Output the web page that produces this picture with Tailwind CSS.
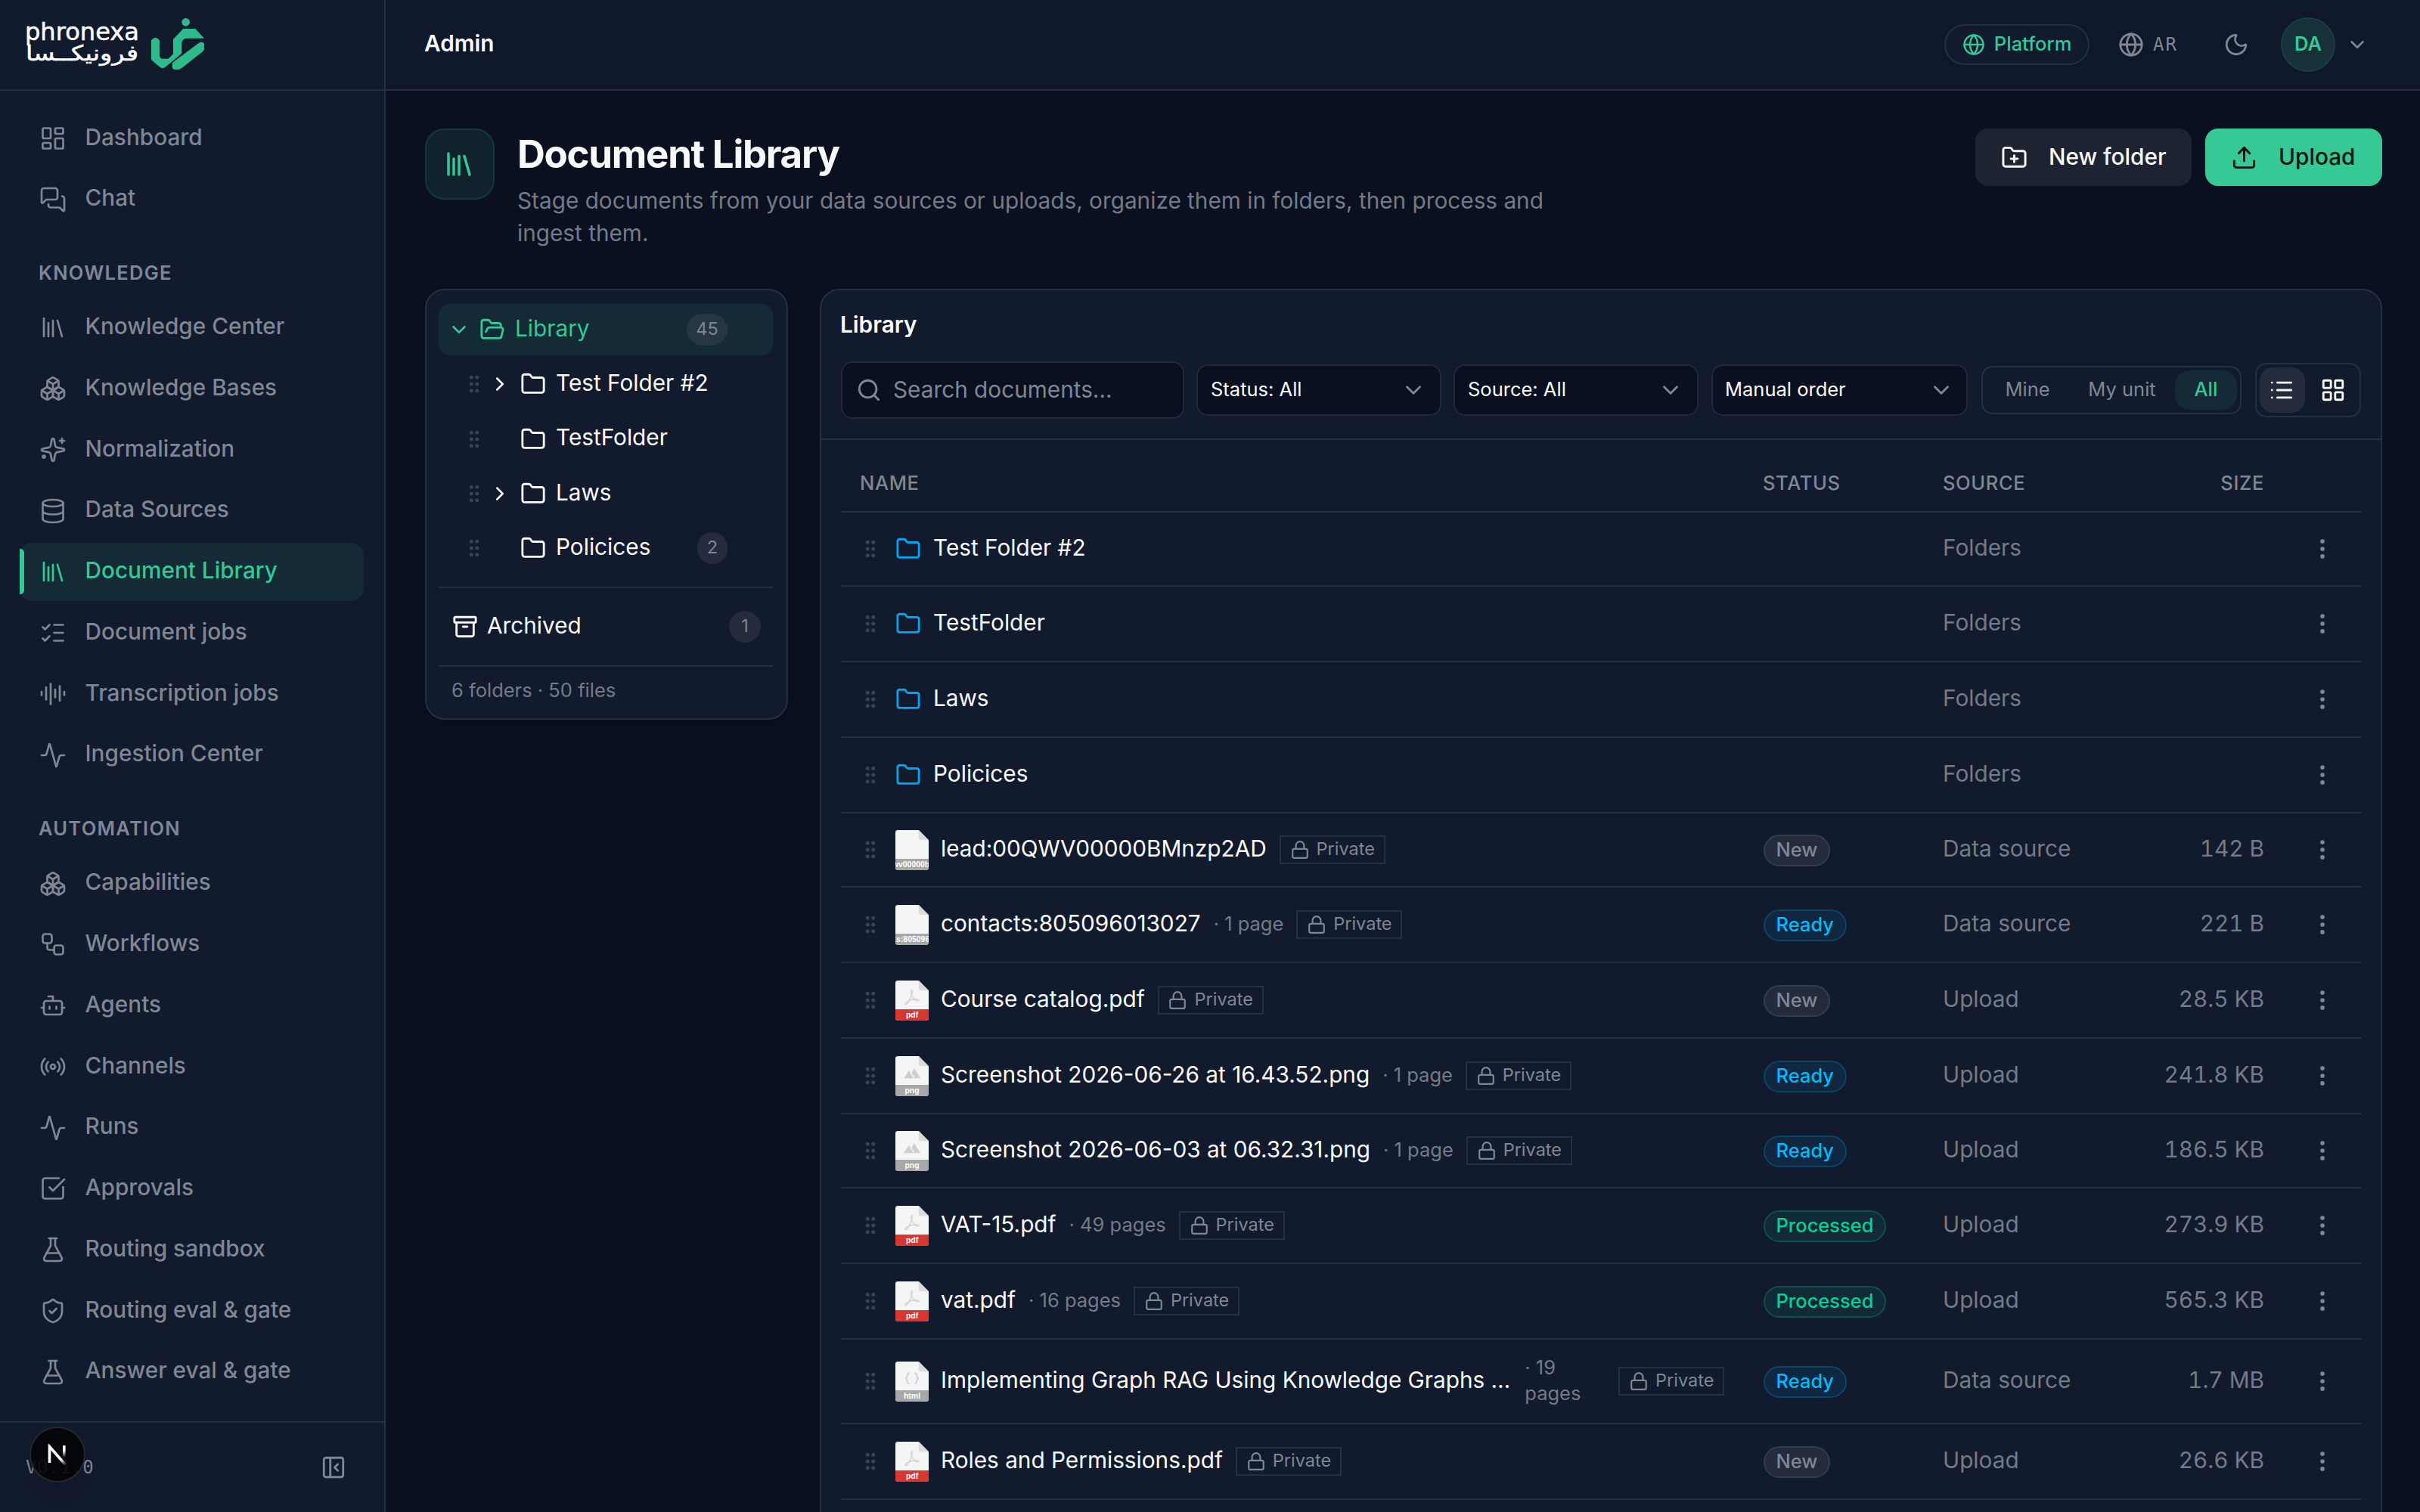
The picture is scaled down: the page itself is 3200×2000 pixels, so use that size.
<!DOCTYPE html>
<html lang="en" class="text-[34px]">
<head>
    <meta charset="UTF-8">
    <meta name="viewport" content="width=device-width, initial-scale=1.0">
    <title>Document Library - Phronexa</title>
    <script src="https://cdn.jsdelivr.net/npm/@tailwindcss/browser@4"></script>
    <style>
        body { font-family: 'Inter', sans-serif; }
        symbol { fill: none; stroke: currentColor; stroke-linecap: round; stroke-linejoin: round; }
    </style>
</head>
<body class="bg-[#0a1020] text-[#fafafa] text-sm h-[2000px] w-[3200px] overflow-hidden flex">

    <!-- Icon sprite -->
    <svg class="hidden">
        <symbol id="dashboard" viewBox="0 0 24 24"><rect width="7" height="9" x="3" y="3" rx="1"/><rect width="7" height="5" x="14" y="3" rx="1"/><rect width="7" height="9" x="14" y="12" rx="1"/><rect width="7" height="5" x="3" y="16" rx="1"/></symbol>
        <symbol id="chat" viewBox="0 0 24 24"><path d="M16 10a2 2 0 0 1-2 2H6.828a2 2 0 0 0-1.414.586l-2.202 2.202A.71.71 0 0 1 2 14.286V4a2 2 0 0 1 2-2h10a2 2 0 0 1 2 2z"/><path d="M20 9a2 2 0 0 1 2 2v10.286a.71.71 0 0 1-1.212.502l-2.202-2.202A2 2 0 0 0 17.172 19H10a2 2 0 0 1-2-2v-1"/></symbol>
        <symbol id="library" viewBox="0 0 24 24"><path d="m16 6 4 14"/><path d="M12 6v14"/><path d="M8 8v12"/><path d="M4 4v16"/></symbol>
        <symbol id="boxes" viewBox="0 0 24 24"><path d="M2.97 12.92A2 2 0 0 0 2 14.63v3.24a2 2 0 0 0 .97 1.71l3 1.8a2 2 0 0 0 2.06 0L12 19v-5.5l-5-3-4.03 2.42Z"/><path d="m7 16.5-4.74-2.85"/><path d="m7 16.5 5-3"/><path d="M7 16.5v5.17"/><path d="M12 13.5V19l3.97 2.38a2 2 0 0 0 2.06 0l3-1.8a2 2 0 0 0 .97-1.71v-3.24a2 2 0 0 0-.97-1.71L17 10.5l-5 3Z"/><path d="m17 16.5-5-3"/><path d="m17 16.5 4.74-2.85"/><path d="M17 16.5v5.17"/><path d="M7.97 4.42A2 2 0 0 0 7 6.13v4.37l5 3 5-3V6.13a2 2 0 0 0-.97-1.71l-3-1.8a2 2 0 0 0-2.06 0l-3 1.8Z"/><path d="M12 8 7.26 5.15"/><path d="m12 8 4.74-2.85"/><path d="M12 13.5V8"/></symbol>
        <symbol id="sparkles" viewBox="0 0 24 24"><path d="M11.017 2.814a1 1 0 0 1 1.966 0l1.051 5.558a2 2 0 0 0 1.594 1.594l5.558 1.051a1 1 0 0 1 0 1.966l-5.558 1.051a2 2 0 0 0-1.594 1.594l-1.051 5.558a1 1 0 0 1-1.966 0l-1.051-5.558a2 2 0 0 0-1.594-1.594l-5.558-1.051a1 1 0 0 1 0-1.966l5.558-1.051a2 2 0 0 0 1.594-1.594z"/><path d="M20 2v4"/><path d="M22 4h-4"/><circle cx="4" cy="18" r="1"/></symbol>
        <symbol id="database" viewBox="0 0 24 24"><ellipse cx="12" cy="5" rx="9" ry="3"/><path d="M3 5v14a9 3 0 0 0 18 0V5"/><path d="M3 12a9 3 0 0 0 18 0"/></symbol>
        <symbol id="checks" viewBox="0 0 24 24"><path d="M13 5h8"/><path d="M13 12h8"/><path d="M13 19h8"/><path d="m3 17 2 2 4-4"/><path d="m3 7 2 2 4-4"/></symbol>
        <symbol id="audio" viewBox="0 0 24 24"><path d="M2 10v3"/><path d="M6 6v11"/><path d="M10 3v18"/><path d="M14 8v7"/><path d="M18 5v13"/><path d="M22 10v3"/></symbol>
        <symbol id="activity" viewBox="0 0 24 24"><path d="M22 12h-2.48a2 2 0 0 0-1.93 1.46l-2.35 8.36a.25.25 0 0 1-.48 0L9.24 2.18a.25.25 0 0 0-.48 0l-2.35 8.36A2 2 0 0 1 4.49 12H2"/></symbol>
        <symbol id="workflow" viewBox="0 0 24 24"><rect width="8" height="8" x="3" y="3" rx="2"/><path d="M7 11v4a2 2 0 0 0 2 2h4"/><rect width="8" height="8" x="13" y="13" rx="2"/></symbol>
        <symbol id="bot" viewBox="0 0 24 24"><path d="M12 8V4H8"/><rect width="16" height="12" x="4" y="8" rx="2"/><path d="M2 14h2"/><path d="M20 14h2"/><path d="M15 13v2"/><path d="M9 13v2"/></symbol>
        <symbol id="radio" viewBox="0 0 24 24"><path d="M16.247 7.761a6 6 0 0 1 0 8.478"/><path d="M19.075 4.933a10 10 0 0 1 0 14.134"/><path d="M4.925 19.067a10 10 0 0 1 0-14.134"/><path d="M7.753 16.239a6 6 0 0 1 0-8.478"/><circle cx="12" cy="12" r="2"/></symbol>
        <symbol id="approve" viewBox="0 0 24 24"><path d="M21 10.656V19a2 2 0 0 1-2 2H5a2 2 0 0 1-2-2V5a2 2 0 0 1 2-2h12.344"/><path d="m9 11 3 3L22 4"/></symbol>
        <symbol id="flask" viewBox="0 0 24 24"><path d="M14 2v6a2 2 0 0 0 .245.96l5.51 10.08A2 2 0 0 1 18 22H6a2 2 0 0 1-1.755-2.96l5.51-10.08A2 2 0 0 0 10 8V2"/><path d="M6.453 15h11.094"/><path d="M8.5 2h7"/></symbol>
        <symbol id="shield" viewBox="0 0 24 24"><path d="M20 13c0 5-3.5 7.5-7.66 8.95a1 1 0 0 1-.67-.01C7.5 20.5 4 18 4 13V6a1 1 0 0 1 1-1c2 0 4.5-1.2 6.24-2.72a1.17 1.17 0 0 1 1.52 0C14.51 3.81 17 5 19 5a1 1 0 0 1 1 1z"/><path d="m9 12 2 2 4-4"/></symbol>
        <symbol id="panel-close" viewBox="0 0 24 24"><rect width="18" height="18" x="3" y="3" rx="2"/><path d="M9 3v18"/><path d="m16 15-3-3 3-3"/></symbol>
        <symbol id="globe" viewBox="0 0 24 24"><circle cx="12" cy="12" r="10"/><path d="M12 2a14.5 14.5 0 0 0 0 20 14.5 14.5 0 0 0 0-20"/><path d="M2 12h20"/></symbol>
        <symbol id="moon" viewBox="0 0 24 24"><path d="M20.985 12.486a9 9 0 1 1-9.473-9.472c.405-.022.617.46.402.803a6 6 0 0 0 8.268 8.268c.344-.215.825-.004.803.401"/></symbol>
        <symbol id="down" viewBox="0 0 24 24"><path d="m6 9 6 6 6-6"/></symbol>
        <symbol id="right" viewBox="0 0 24 24"><path d="m9 18 6-6-6-6"/></symbol>
        <symbol id="folder" viewBox="0 0 24 24"><path d="M20 20a2 2 0 0 0 2-2V8a2 2 0 0 0-2-2h-7.9a2 2 0 0 1-1.69-.9L9.6 3.9A2 2 0 0 0 7.93 3H4a2 2 0 0 0-2 2v13a2 2 0 0 0 2 2Z"/></symbol>
        <symbol id="folder-plus" viewBox="0 0 24 24"><path d="M12 10v6"/><path d="M9 13h6"/><path d="M20 20a2 2 0 0 0 2-2V8a2 2 0 0 0-2-2h-7.9a2 2 0 0 1-1.69-.9L9.6 3.9A2 2 0 0 0 7.93 3H4a2 2 0 0 0-2 2v13a2 2 0 0 0 2 2Z"/></symbol>
        <symbol id="folder-open" viewBox="0 0 24 24"><path d="m6 14 1.5-2.9A2 2 0 0 1 9.24 10H20a2 2 0 0 1 1.94 2.5l-1.54 6a2 2 0 0 1-1.95 1.5H4a2 2 0 0 1-2-2V5a2 2 0 0 1 2-2h3.9a2 2 0 0 1 1.69.9l.81 1.2a2 2 0 0 0 1.67.9H18a2 2 0 0 1 2 2v2"/></symbol>
        <symbol id="upload" viewBox="0 0 24 24"><path d="M12 3v12"/><path d="m17 8-5-5-5 5"/><path d="M21 15v4a2 2 0 0 1-2 2H5a2 2 0 0 1-2-2v-4"/></symbol>
        <symbol id="archive" viewBox="0 0 24 24"><rect width="20" height="5" x="2" y="3" rx="1"/><path d="M4 8v11a2 2 0 0 0 2 2h12a2 2 0 0 0 2-2V8"/><path d="M10 12h4"/></symbol>
        <symbol id="grip" viewBox="0 0 24 24"><circle cx="9" cy="12" r="1"/><circle cx="9" cy="5" r="1"/><circle cx="9" cy="19" r="1"/><circle cx="15" cy="12" r="1"/><circle cx="15" cy="5" r="1"/><circle cx="15" cy="19" r="1"/></symbol>
        <symbol id="more" viewBox="0 0 24 24"><circle cx="12" cy="12" r="1"/><circle cx="12" cy="5" r="1"/><circle cx="12" cy="19" r="1"/></symbol>
        <symbol id="search" viewBox="0 0 24 24"><path d="m21 21-4.34-4.34"/><circle cx="11" cy="11" r="8"/></symbol>
        <symbol id="list" viewBox="0 0 24 24"><path d="M3 5h.01"/><path d="M3 12h.01"/><path d="M3 19h.01"/><path d="M8 5h13"/><path d="M8 12h13"/><path d="M8 19h13"/></symbol>
        <symbol id="grid" viewBox="0 0 24 24"><rect width="7" height="7" x="3" y="3" rx="1"/><rect width="7" height="7" x="14" y="3" rx="1"/><rect width="7" height="7" x="14" y="14" rx="1"/><rect width="7" height="7" x="3" y="14" rx="1"/></symbol>
        <symbol id="lock" viewBox="0 0 24 24"><rect width="18" height="11" x="3" y="11" rx="2"/><path d="M7 11V7a5 5 0 0 1 10 0v4"/></symbol>
        <!-- glyphs printed on the file thumbnails -->
        <symbol id="glyph-pdf" viewBox="0 0 24 24"><path stroke-width="1.1" d="M11.5 2.5c-1.6 0-.8 5 .6 8 1.8 4 4.5 6 7.4 6.2 2.3.1 2-1.6-.5-2-4-.6-9.5.9-13 2.8-3 1.7-3.5 3.8-2.5 3.9 2.2.2 5.7-6.6 7.7-12 1.3-3.7 1.7-6.9.3-6.9Z"/></symbol>
        <symbol id="glyph-image" viewBox="0 0 24 24"><path fill="currentColor" stroke="none" d="M1 19 8 9l3 4 4-7 8 13Z"/><path class="stroke-[#f5f5f5]" stroke-width="1.5" d="m10 12 4.5 6"/></symbol>
        <symbol id="glyph-code" viewBox="0 0 24 24"><path stroke-width="1.8" d="M8 5c-3 0-1.5 5.5-4 7 2.5 1.5 1 7 4 7M16 5c3 0 1.5 5.5 4 7-2.5 1.5-1 7-4 7"/></symbol>
    </svg>

    <!-- Sidebar -->
    <aside class="w-[510px] shrink-0 h-full bg-[#121a2e] border-r-2 border-[#243044] flex flex-col">
        <div class="h-[120px] shrink-0 border-b-2 border-[#243044] pl-[32px] flex items-center">
            <svg class="w-[240px] h-[80px] overflow-visible" viewBox="32 19 240 80">
                <g fill="#fff" stroke="#fff" stroke-width=".5" font-family="DejaVu Sans, sans-serif">
                    <text x="33" y="53" font-size="32" textLength="151" lengthAdjust="spacingAndGlyphs">phronexa</text>
                    <text x="183" y="80" font-size="28" textLength="149" lengthAdjust="spacingAndGlyphs" direction="rtl">فرونيكــسا</text>
                </g>
                <g fill="#2fba8b" transform="translate(20 10) scale(.3333)">
                    <circle cx="677" cy="58" r="16"/>
                    <path d="M540 130q16-22 33 0v58q0 15 15 15h20l19-19v-58l40-42h48l35 38h-66q-23 0-23 22v38l-66 55q-10 7-20 0l-35-30z"/>
                    <path d="M629 215 728 141q12-8 22 1v22q0 6-5 10l-85 67q-5 5-11 5h-17q-9-2-9-12v-8q0-7 6-11z"/>
                </g>
            </svg>
        </div>
        <nav id="nav" class="flex-1 overflow-hidden pl-3 pr-[27px] pt-[24.5px]"></nav>
        <div class="h-[120px] shrink-0 border-t-2 border-[#243044] pl-[34px] pr-[50px] flex items-center justify-between text-[#7f8794]">
            <span class="font-['DejaVu_Sans_Mono',monospace] text-[24px] tracking-[0.6px]">V0.1.0</span>
            <svg class="size-4 stroke-2"><use href="#panel-close"/></svg>
        </div>
    </aside>

    <!-- Dev tools badge floating over the sidebar footer -->
    <div class="absolute left-[39px] top-[1887px] size-[74px] rounded-full bg-[#030407]/90 border-2 border-[#26282c] shadow-2xl flex items-center justify-center">
        <svg class="size-[28px]" viewBox="0 0 28 28" fill="none" stroke-width="3.6">
            <defs>
                <linearGradient id="fade" x1="0" y1="0" x2="0" y2="1"><stop offset=".4" stop-color="#fff"/><stop offset="1" stop-color="#fff" stop-opacity="0"/></linearGradient>
                <linearGradient id="fade-diag" x1="0" y1="0" x2="1" y2="1"><stop offset=".7" stop-color="#fff"/><stop offset="1" stop-color="#fff" stop-opacity="0"/></linearGradient>
            </defs>
            <path stroke="url(#fade-diag)" d="M3.5 25V3.5L25 28"/>
            <rect x="21" y="2" width="3.6" height="16" fill="url(#fade)"/>
        </svg>
    </div>

    <div class="flex-1 min-w-0 flex flex-col">
        <!-- Top bar -->
        <header class="h-[120px] shrink-0 bg-[#0f172a] border-b-2 border-[#243044] pl-[51px] pr-[68px] flex items-center justify-between">
            <h2 class="font-semibold pb-[4px]">Admin</h2>
            <div class="flex items-center text-[#7f8794]">
                <div class="h-[54px] w-[192px] border-2 border-[#243044] bg-[#121a2e] rounded-full flex items-center justify-center gap-[12px] text-[#34c896] text-xs font-medium">
                    <svg class="size-[30px] stroke-2"><use href="#globe"/></svg><span class="pb-[3px]">Platform</span>
                </div>
                <svg class="size-4 stroke-2 ml-[38px]"><use href="#globe"/></svg>
                <span class="font-['DejaVu_Sans_Mono',monospace] text-[24px] tracking-[2px] ml-[12px]">AR</span>
                <svg class="size-4 stroke-2 ml-[60px]"><use href="#moon"/></svg>
                <div class="size-[72px] rounded-full bg-[#16313a] border-2 border-[#1a3d41] text-[#34c896] text-xs font-semibold flex items-center justify-center ml-[42px] pb-[3px]">DA</div>
                <svg class="size-[30px] stroke-2 ml-[14px]"><use href="#down"/></svg>
            </div>
        </header>

        <main class="flex-1 min-h-0 pl-[52px] pr-[50px] pt-[50px] flex flex-col">
            <!-- Page heading -->
            <div class="flex items-start h-[212px] shrink-0">
                <div class="w-[92px] h-[94px] rounded-xl bg-[#10232c] border-2 border-[#133a38] text-[#34c896] flex items-center justify-center pr-[2px]">
                    <svg class="size-[42px] stroke-2"><use href="#library"/></svg>
                </div>
                <div class="ml-[30px] w-[1440px]">
                    <h1 class="text-2xl leading-[68px] font-bold tracking-tight">Document Library</h1>
                    <p class="w-[1428px] mt-[6px] leading-[42.5px] text-[#747b88]">Stage documents from your data sources or uploads, organize them in folders, then process and ingest them.</p>
                </div>
                <div class="ml-auto flex gap-[18px] font-medium">
                    <button class="w-[286px] h-[76px] rounded-lg bg-[#1e2331] flex items-center pl-[34px] gap-[28px]">
                        <svg class="size-[35px] stroke-2"><use href="#folder-plus"/></svg><span class="pb-[2px]">New folder</span>
                    </button>
                    <button class="w-[234px] h-[76px] rounded-lg bg-[#36c996] text-[#07130f] flex items-center pl-[34px] gap-[28px]">
                        <svg class="size-[35px] stroke-2"><use href="#upload"/></svg><span class="pb-[2px]">Upload</span>
                    </button>
                </div>
            </div>

            <div class="flex-1 min-h-0 flex items-start gap-[42px]">
                <!-- Folder tree -->
                <section class="w-[480px] h-[570px] shrink-0 rounded-[26px] border-2 border-[#243044] bg-[#121a2e] pl-[16px] pr-[18px] pt-[18px] shadow-lg">
                    <div class="h-[68px] rounded-[15px] bg-[#152a37] text-[#34c896] flex items-center pl-[12px] pr-[60px]">
                        <svg class="size-[30px] stroke-2"><use href="#down"/></svg>
                        <svg class="size-4 stroke-2 ml-[12px] mr-[13px]"><use href="#folder-open"/></svg>
                        <span class="pb-[4px]">Library</span>
                        <span class="ml-auto h-[42px] w-[54px] rounded-full bg-[#273643] text-[#7f8794] text-[23.5px] flex items-center justify-center pb-[2px]">45</span>
                    </div>
                    <div id="tree"></div>
                    <div class="mt-[17px] py-[17px] border-y-2 border-[#243044]">
                        <div class="h-[68px] pl-[18px] pr-[16px] flex items-center">
                            <svg class="size-4 stroke-2 mr-[12px]"><use href="#archive"/></svg>
                            <span class="pb-[4px]">Archived</span>
                            <span class="ml-auto size-[42px] rounded-full bg-[#232b3c] text-[#7f8794] text-[23.5px] flex items-center justify-center pb-[2px]">1</span>
                        </div>
                    </div>
                    <p class="pt-[14px] pl-[17px] text-xs text-[#747b88]">6 folders · 50 files</p>
                </section>

                <!-- Documents -->
                <section class="flex-1 h-[1700px] rounded-t-[26px] border-2 border-[#243044] bg-[#121a2e]">
                    <div class="h-[198px] px-[26px] pt-[24px] border-b-2 border-[#243044]">
                        <h3 class="font-semibold leading-[42px] -ml-px">Library</h3>
                        <div class="flex items-center mt-[28px]">
                            <div class="w-[454px] h-[76px] rounded-[15px] border-2 border-[#1f293a] bg-[#0a101f] text-[#7f8794] flex items-center pl-[18px] gap-[15px]">
                                <svg class="size-[34px] stroke-2"><use href="#search"/></svg><span class="pb-[2px]">Search documents...</span>
                            </div>
                            <div class="w-[324px] h-[68px] ml-[16px] rounded-[15px] border-2 border-[#1f293a] bg-[#0a101f] text-xs flex items-center justify-between pl-[17px] pr-[18px]"><span class="pb-[2px]">Status: All</span><svg class="size-4 stroke-2 text-[#7f8794]"><use href="#down"/></svg></div>
                            <div class="w-[324px] h-[68px] ml-[16px] rounded-[15px] border-2 border-[#1f293a] bg-[#0a101f] text-xs flex items-center justify-between pl-[17px] pr-[18px]"><span class="pb-[2px]">Source: All</span><svg class="size-4 stroke-2 text-[#7f8794]"><use href="#down"/></svg></div>
                            <div class="w-[339px] h-[68px] ml-[17px] rounded-[15px] border-2 border-[#1f293a] bg-[#0a101f] text-xs flex items-center justify-between pl-[16px] pr-[16px]"><span class="pb-[2px]">Manual order</span><svg class="size-4 stroke-2 text-[#7f8794]"><use href="#down"/></svg></div>
                            <div class="w-[344px] h-[64px] ml-[18px] rounded-[15px] border-2 border-[#243044] text-xs text-[#7f8794] flex items-center p-[4px]">
                                <span class="w-[110px] text-center pb-[2px]">Mine</span>
                                <span class="w-[140px] text-center pb-[2px]">My unit</span>
                                <span class="w-[82px] h-[52px] rounded-[20px] bg-[#152a37] text-[#34c896] font-medium flex items-center justify-center pb-[2px]">All</span>
                            </div>
                            <div class="w-[140px] h-[72px] ml-[18px] rounded-[15px] border-2 border-[#243044] flex items-center justify-between p-[4px]">
                                <span class="size-[60px] rounded-[18px] bg-[#232b3c] flex items-center justify-center pr-[2px]"><svg class="size-[34px] stroke-2"><use href="#list"/></svg></span>
                                <span class="size-[60px] flex items-center justify-center pr-[2px]"><svg class="size-[34px] stroke-2"><use href="#grid"/></svg></span>
                            </div>
                        </div>
                    </div>
                    <div class="px-[26px]">
                        <div class="h-[96px] border-b-2 border-[#243044] grid grid-cols-[1219px_238px_425px_128px] items-center pt-[20px] text-xs font-medium tracking-wide text-[#7f8794]">
                            <span class="pl-[25px]">NAME</span><span>STATUS</span>
                            <div class="flex justify-between"><span>SOURCE</span><span>SIZE</span></div>
                        </div>
                        <div id="rows"></div>
                    </div>
                </section>
            </div>
        </main>
    </div>

    <script>
        const nav = [
            { items: [['dashboard', 'Dashboard'], ['chat', 'Chat']] },
            { title: 'KNOWLEDGE', items: [['library', 'Knowledge Center'], ['boxes', 'Knowledge Bases'], ['sparkles', 'Normalization'], ['database', 'Data Sources'], ['library', 'Document Library'], ['checks', 'Document jobs'], ['audio', 'Transcription jobs'], ['activity', 'Ingestion Center']] },
            { title: 'AUTOMATION', items: [['boxes', 'Capabilities'], ['workflow', 'Workflows'], ['bot', 'Agents'], ['radio', 'Channels'], ['activity', 'Runs'], ['approve', 'Approvals'], ['flask', 'Routing sandbox'], ['shield', 'Routing eval &amp; gate'], ['flask', 'Answer eval &amp; gate']] }
        ];

        document.getElementById('nav').innerHTML = nav.map(group => `
            ${group.title ? `<h4 class="mt-5 mb-2 pl-3 text-xs font-semibold tracking-wider text-[#7f8794]">${group.title}</h4>` : ''}
            <ul class="space-y-[4.25px]">
                ${group.items.map(([icon, label]) => {
                    const active = label === 'Document Library';
                    return `
                    <li class="relative h-[76.5px] pl-[26.5px] flex items-center gap-[24.5px] rounded-lg font-medium ${active ? 'bg-[#152a37] text-[#34c896]' : 'text-[#7f8794]'}">
                        ${active ? '<span class="absolute left-0 top-[8px] w-[6px] h-[60px] rounded-r-[5px] bg-[#34c896]"></span>' : ''}
                        <svg class="size-[36px] stroke-[1.8]"><use href="#${icon}"/></svg><span class="pb-[4px]">${label}</span>
                    </li>`;
                }).join('')}
            </ul>`).join('');

        const folders = [['Test Folder #2', true], ['TestFolder', false], ['Laws', true], ['Policices', false, 2]];

        document.getElementById('tree').innerHTML = folders.map(([name, nested, count]) => `
            <div class="h-[68px] mt-[4.25px] pl-[32px] pr-[60px] flex items-center">
                <svg class="size-[30px] stroke-2 text-[#3b4353]"><use href="#grip"/></svg>
                <svg class="size-[30px] stroke-2 ml-[4px] ${nested ? '' : 'invisible'}"><use href="#right"/></svg>
                <svg class="size-4 stroke-2 ml-[12px] mr-[13px]"><use href="#folder"/></svg><span class="pb-[4px]">${name}</span>
                ${count ? `<span class="ml-auto w-[40px] h-[42px] rounded-full bg-[#232b3c] text-[#7f8794] text-[23.5px] flex items-center justify-center pb-[2px]">${count}</span>` : ''}
            </div>`).join('');

        const statusClass = {
            New: 'text-[#7f8794] bg-[#232b3c] border-[#333c4d]',
            Ready: 'text-[#00bcff] bg-[#0f2740] border-[#0c4366]',
            Processed: 'text-[#00d492] bg-[#102a37] border-[#0d5148]'
        };

        const docs = [
            { name: 'lead:00QWV00000BMnzp2AD', ext: 'lead:00qwv00000bmnzp2ad', status: 'New', source: 'Data source', size: '142 B', h: 'h-[98px]' },
            { name: 'contacts:805096013027', ext: 'contacts:805096013027', pages: '1 page', status: 'Ready', source: 'Data source', size: '221 B', h: 'h-[100px]' },
            { name: 'Course catalog.pdf', ext: 'pdf', status: 'New', source: 'Upload', size: '28.5 KB', h: 'h-[100px]' },
            { name: 'Screenshot 2026-06-26 at 16.43.52.png', ext: 'png', pages: '1 page', status: 'Ready', source: 'Upload', size: '241.8 KB', h: 'h-[100px]' },
            { name: 'Screenshot 2026-06-03 at 06.32.31.png', ext: 'png', pages: '1 page', status: 'Ready', source: 'Upload', size: '186.5 KB', h: 'h-[98px]' },
            { name: 'VAT-15.pdf', ext: 'pdf', pages: '49 pages', status: 'Processed', source: 'Upload', size: '273.9 KB', h: 'h-[100px]' },
            { name: 'vat.pdf', ext: 'pdf', pages: '16 pages', status: 'Processed', source: 'Upload', size: '565.3 KB', h: 'h-[100px]' },
            { name: 'Implementing Graph RAG Using Knowledge Graphs …', ext: 'html', pages: '19<br>pages', status: 'Ready', source: 'Data source', size: '1.7 MB', h: 'h-[112px]' },
            { name: 'Roles and Permissions.pdf', ext: 'pdf', status: 'New', source: 'Upload', size: '26.6 KB', h: 'h-[100px]' }
        ];

        const glyphs = { pdf: 'glyph-pdf', png: 'glyph-image', html: 'glyph-code' };

        function fileIcon(ext) {
            return `
            <svg class="w-[44px] h-[53px] shrink-0" viewBox="0 0 40 48">
                <path fill="#f5f5f5" d="M3 0h25l12 12v33a3 3 0 0 1-3 3H3a3 3 0 0 1-3-3V3a3 3 0 0 1 3-3Z"/>
                <path fill="#dbdbdb" d="M28 0l12 12h-9a3 3 0 0 1-3-3Z"/>
                ${glyphs[ext] ? `<svg x="9" y="9" width="22" height="22" class="text-[#cfcfcf]"><use href="#${glyphs[ext]}"/></svg>` : ''}
                <path fill="${ext === 'pdf' ? '#d93831' : '#a8a8a8'}" d="M0 34.5h40V45a3 3 0 0 1-3 3H3a3 3 0 0 1-3-3Z"/>
                <text x="20" y="44.5" text-anchor="middle" font-size="9.5" font-weight="700" fill="#fff" font-family="Liberation Sans, sans-serif">${ext}</text>
            </svg>`;
        }

        const rowClass = 'border-b-2 border-[#243044] grid grid-cols-[1219px_238px_425px_128px] items-center';
        const grip = '<svg class="size-[30px] stroke-2 shrink-0 text-[#3b4353]"><use href="#grip"/></svg>';
        const more = '<svg class="size-4 stroke-2 ml-[60px] text-[#7f8794]"><use href="#more"/></svg>';

        document.getElementById('rows').innerHTML =
            folders.map(([name], i) => `
            <div class="${i === 0 ? 'h-[98px]' : 'h-[100px]'} ${rowClass}">
                <div class="pl-[24px] flex items-center">${grip}
                    <svg class="size-4 stroke-2 ml-[18px] mr-[16px] text-[#00a6f4]"><use href="#folder"/></svg><span class="pb-[4px]">${name}</span>
                </div>
                <span></span><span class="text-[#747b88] pb-[4px]">Folders</span>${more}
            </div>`).join('') +
            docs.map(d => `
            <div class="${d.h} ${rowClass}">
                <div class="pl-[24px] flex items-center">${grip}
                    <span class="ml-[18px] mr-[16px]">${fileIcon(d.ext)}</span>
                    <span class="whitespace-nowrap pb-[4px]">${d.name}</span>
                    ${d.pages ? `<span class="${d.ext === 'html' ? 'ml-[19px] w-[107px]' : 'ml-[17px]'} text-xs leading-[34px] pb-[2px] text-[#747b88]">· ${d.pages}</span>` : ''}
                    <span class="ml-[17px] w-[140px] h-[38px] border-2 border-[#243044] text-[#7f8794] text-[23.5px] flex items-center justify-center gap-[9px]"><svg class="size-[26px] stroke-2"><use href="#lock"/></svg><span class="pb-[3px]">Private</span></span>
                </div>
                <span><span class="inline-flex items-center h-[42px] ml-px px-[14.5px] pb-[2px] rounded-full border-2 text-xs font-medium align-middle ${statusClass[d.status]}">${d.status}</span></span>
                <div class="flex justify-between pb-[4px] text-[#747b88]"><span>${d.source}</span><span class="tabular-nums">${d.size}</span></div>
                ${more}
            </div>`).join('');
    </script>
</body>
</html>
